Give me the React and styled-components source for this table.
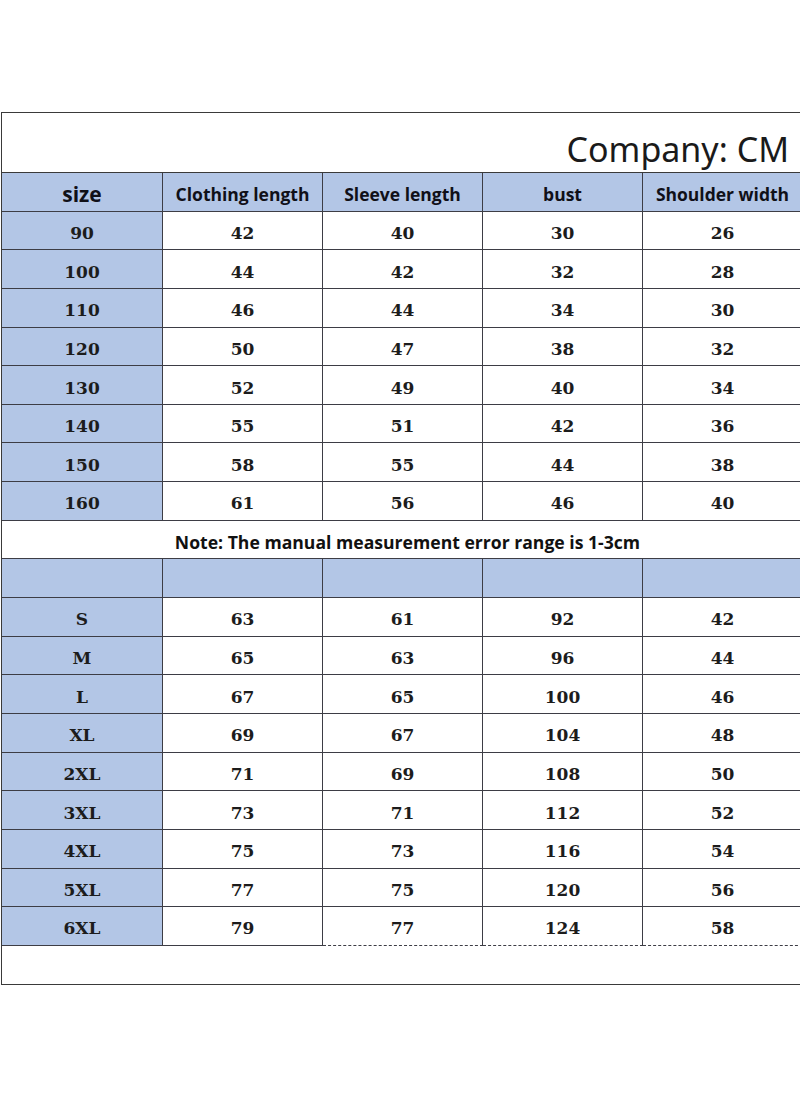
import React from 'react';
import styled, { createGlobalStyle } from 'styled-components';

const GlobalStyle = createGlobalStyle`
  html, body {
    margin: 0;
    padding: 0;
    background: #fff;
    overflow: hidden;
  }
  body {
    font-family: "Open Sans", "Liberation Sans", sans-serif;
    color: #151515;
  }
`;

const Page = styled.div`
  padding: 112px 0 0 1px;
  width: 800px;
  box-sizing: border-box;
`;

const Sheet = styled.div`
  border: 1px solid #3a3a3a;
  border-right: none;
  width: 812px;
  box-sizing: border-box;
`;

const Title = styled.div`
  height: 60px;
  display: flex;
  align-items: center;
  justify-content: flex-end;
  padding: 12px 11px 0 0;
  border-bottom: 1px solid #3a3a3a;
  font-family: "Noto Sans", "DejaVu Sans", sans-serif;
  font-size: 34px;
  color: #1a1a1a;
  width: 798px;
  box-sizing: border-box;
`;

const Grid = styled.div`
  display: grid;
  grid-template-columns: 161px 160px 160px 160px 160px;
  grid-auto-rows: 38.65px;
`;

const Cell = styled.div`
  display: flex;
  align-items: center;
  justify-content: center;
  box-sizing: border-box;
  padding-top: 5px;
  border-right: 1px solid #3d3d45;
  border-bottom: 1px ${p => (p.$dashed ? 'dashed' : 'solid')} #3d3d45;
  background: ${p => (p.$blue ? '#b3c6e6' : '#fff')};
  font-family: "DejaVu Serif", "Liberation Serif", serif;
  font-weight: 700;
  font-size: 17px;
  color: #1c1c1c;
  white-space: nowrap;
`;

const HeadCell = styled(Cell)`
  font-family: "Open Sans", "Liberation Sans", sans-serif;
  font-size: ${p => (p.$big ? '21px' : '17.5px')};
  padding-top: 4px;
  color: #101018;
`;

const Note = styled.div`
  grid-column: 1 / -1;
  display: flex;
  align-items: center;
  justify-content: center;
  width: 801px;
  box-sizing: border-box;
  padding: 4px 0 0 10px;
  border-bottom: 1px solid #3d3d45;
  font-weight: 700;
  font-size: 17.6px;
  color: #111;
`;

const Spacer = styled.div`
  height: 38px;
`;

const headers = ['Clothing length', 'Sleeve length', 'bust', 'Shoulder width'];

const kids = [
  ['90', 42, 40, 30, 26],
  ['100', 44, 42, 32, 28],
  ['110', 46, 44, 34, 30],
  ['120', 50, 47, 38, 32],
  ['130', 52, 49, 40, 34],
  ['140', 55, 51, 42, 36],
  ['150', 58, 55, 44, 38],
  ['160', 61, 56, 46, 40],
];

const adults = [
  ['S', 63, 61, 92, 42],
  ['M', 65, 63, 96, 44],
  ['L', 67, 65, 100, 46],
  ['XL', 69, 67, 104, 48],
  ['2XL', 71, 69, 108, 50],
  ['3XL', 73, 71, 112, 52],
  ['4XL', 75, 73, 116, 54],
  ['5XL', 77, 75, 120, 56],
  ['6XL', 79, 77, 124, 58],
];

const Row = ({ data, last }) => (
  <>
    {data.map((v, i) => (
      <Cell key={i} $blue={i === 0} $dashed={last && i >= 2}>{v}</Cell>
    ))}
  </>
);

export default function App() {
  return (
    <Page>
      <GlobalStyle />
      <Sheet>
        <Title>Company: CM</Title>
        <Grid>
          <HeadCell $blue $big>size</HeadCell>
          {headers.map(h => <HeadCell key={h} $blue>{h}</HeadCell>)}
          {kids.map(r => <Row key={r[0]} data={r} />)}
          <Note>Note: The manual measurement error range is 1-3cm</Note>
          {[0, 1, 2, 3, 4].map(i => <Cell key={i} $blue />)}
          {adults.map((r, i) => <Row key={r[0]} data={r} last={i === adults.length - 1} />)}
        </Grid>
        <Spacer />
      </Sheet>
    </Page>
  );
}
